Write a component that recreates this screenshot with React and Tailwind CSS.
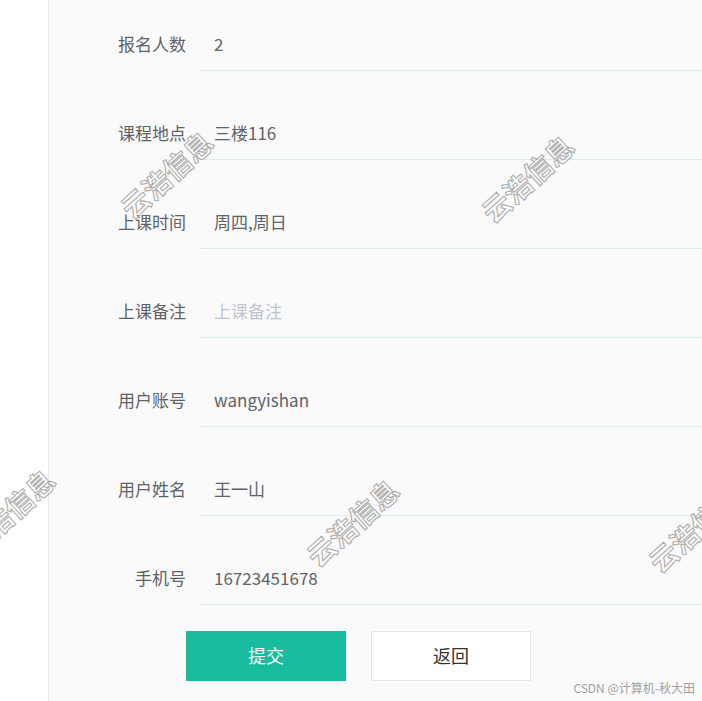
import React from 'react';

const fields = [
  { label: '报名人数', value: '2' },
  { label: '课程地点', value: '三楼116' },
  { label: '上课时间', value: '周四,周日' },
  { label: '上课备注', value: '', placeholder: '上课备注' },
  { label: '用户账号', value: 'wangyishan' },
  { label: '用户姓名', value: '王一山' },
  { label: '手机号', value: '16723451678' },
];

const marks = [
  { left: 166, top: 174 },
  { left: 527, top: 178 },
  { left: 8, top: 512 },
  { left: 352, top: 522 },
  { left: 694, top: 528 },
];

const Watermark = ({ left, top }) => (
  <div
    className="absolute pointer-events-none whitespace-nowrap text-[28px] font-bold text-transparent [-webkit-text-stroke:1px_#a9a9a9] -translate-x-1/2 -translate-y-1/2 -rotate-[42deg]"
    style={{ left, top }}
  >
    云浩信息
  </div>
);

const App = () => {
  return (
    <div className="relative flex h-[701px] w-[702px] overflow-hidden bg-white font-['Noto_Sans_CJK_SC','Liberation_Sans',sans-serif]">
      {/* Sidebar */}
      <div className="w-[49px] shrink-0 border-r border-[#eeeeee] bg-white"></div>

      {/* Form */}
      <div className="flex-1 bg-[#fafafa] pt-[21px]">
        {fields.map((f) => (
          <div key={f.label} className="mb-[39px] flex items-center">
            <div className="w-[150px] shrink-0 pb-[4px] pr-[13px] text-right text-[17px] text-[#606266]">
              {f.label}
            </div>
            <div className="flex h-[50px] flex-1 items-center border-b border-[#d9efec] pb-[4px] pl-[15px] text-[17px]">
              {f.value ? (
                <span className="text-[#606266]">{f.value}</span>
              ) : (
                <span className="text-[#c0c4cc]">{f.placeholder}</span>
              )}
            </div>
          </div>
        ))}

        <div className="-mt-[13px] flex gap-[25px] pl-[137px]">
          <button className="h-[50px] w-[160px] pb-[2px] bg-[#19bc9c] text-[18px] text-white">提交</button>
          <button className="h-[50px] w-[160px] pb-[2px] border border-[#e6e6e6] bg-white text-[18px] text-[#333333]">返回</button>
        </div>
      </div>

      {marks.map((m, i) => (
        <Watermark key={i} {...m} />
      ))}

      <div className="absolute bottom-[4px] right-[7px] text-[12px] text-[#a0a0a0]">
        CSDN @计算机-秋大田
      </div>
    </div>
  );
};

export default App;
